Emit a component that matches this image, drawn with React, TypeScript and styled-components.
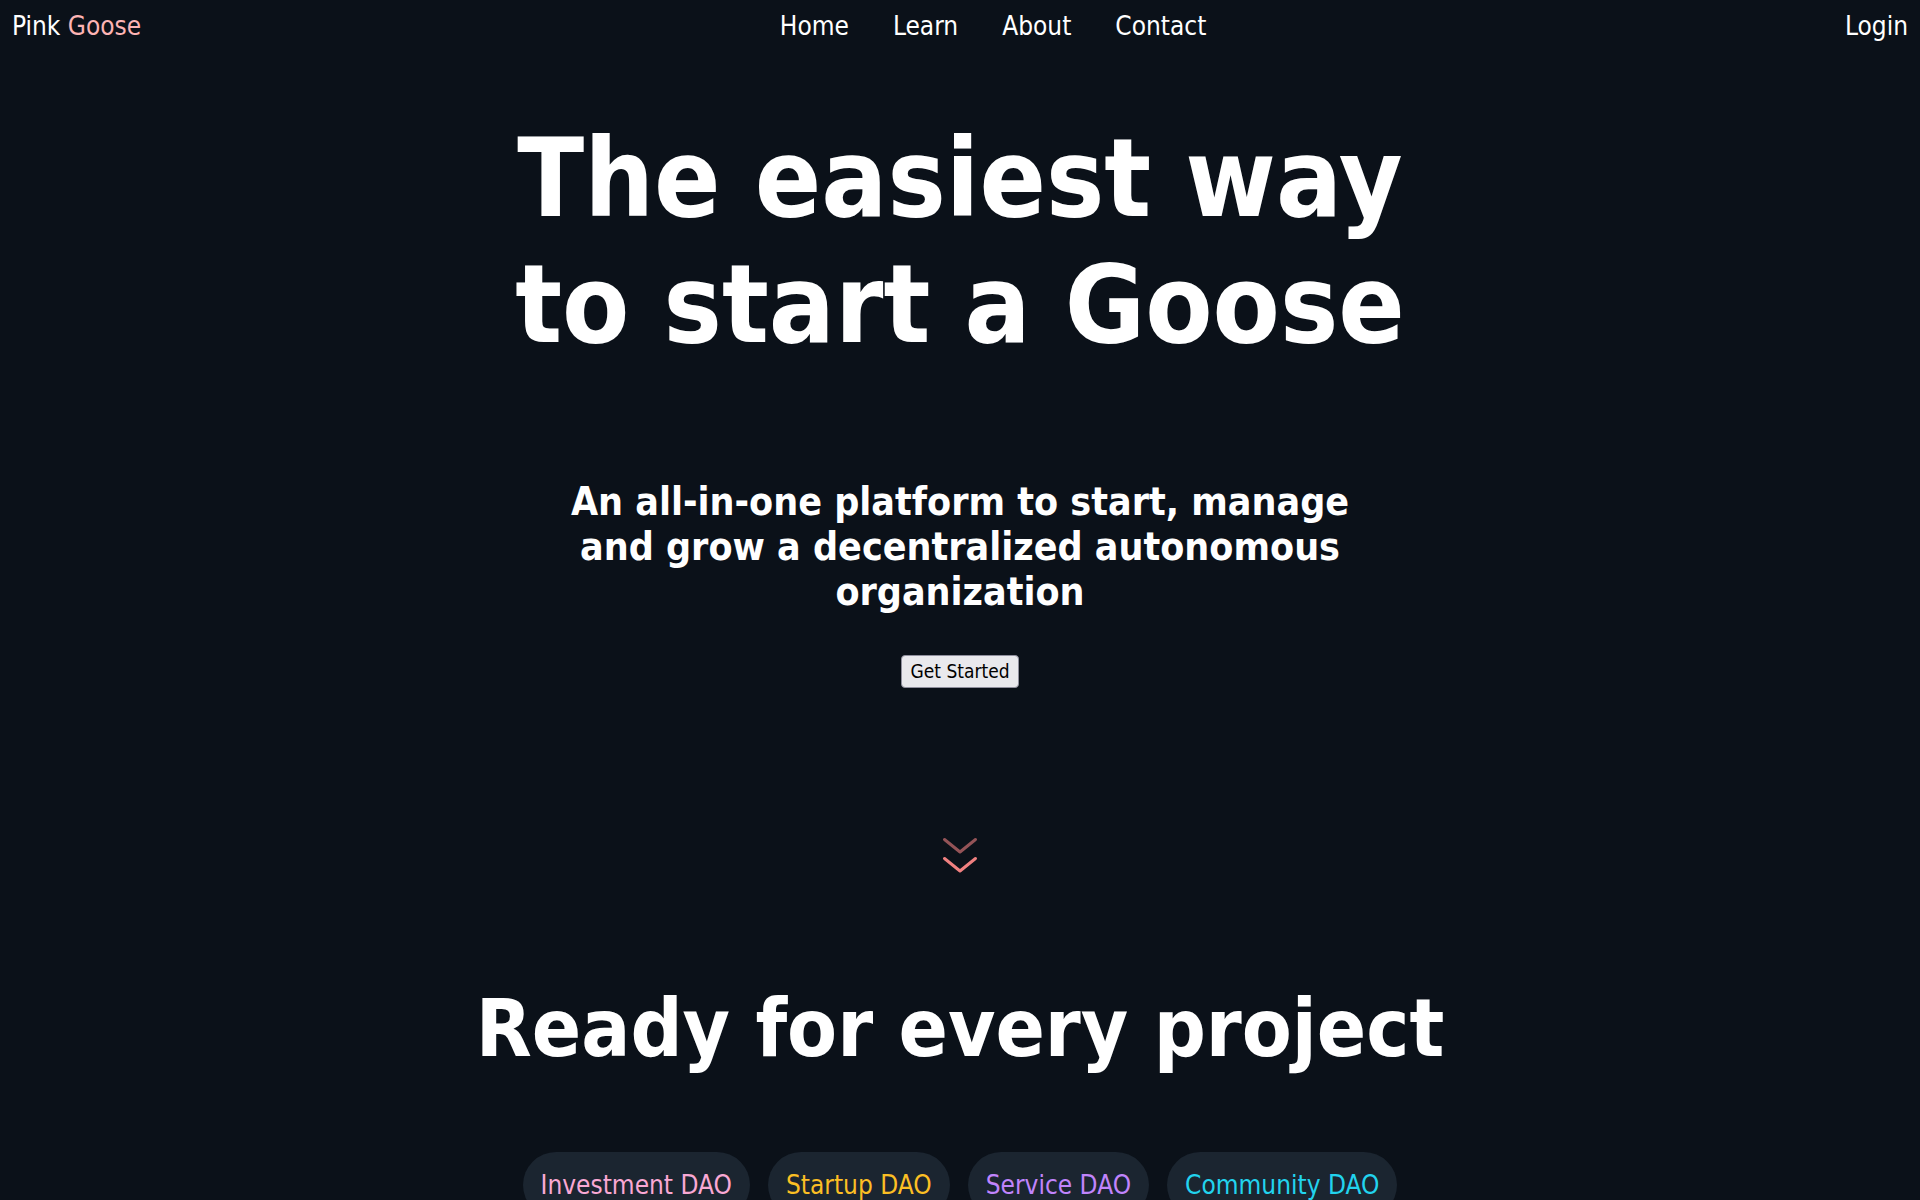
import React from "react";
import styled, { createGlobalStyle } from "styled-components";

const GlobalStyle = createGlobalStyle`
  html, body {
    margin: 0;
    padding: 0;
    background: #0b1119;
  }
  body {
    font-family: "DejaVu Sans Condensed", "DejaVu Sans", sans-serif;
    font-stretch: condensed;
    color: #ffffff;
  }
`;

const Page = styled.div`
  min-height: 1200px;
  overflow: hidden;
`;

const Nav = styled.nav`
  display: flex;
  align-items: center;
  justify-content: space-between;
  padding: 11px 12px;
  font-size: 26px;
  line-height: 30px;
`;

const Logo = styled.a`
  color: #ffffff;
  text-decoration: none;
`;

const LogoAccent = styled.span`
  color: #fdb4b4;
`;

const NavLinks = styled.div`
  display: flex;
  gap: 44px;
`;

const NavLink = styled.a`
  color: #ffffff;
  text-decoration: none;
`;

const Hero = styled.section`
  display: flex;
  flex-direction: column;
  align-items: center;
  text-align: center;
  padding-top: 64px;
`;

const Headline = styled.h1`
  margin: 0;
  font-size: 109px;
  line-height: 126px;
  font-weight: bold;
`;

const Subtitle = styled.h2`
  margin: 111px 0 0;
  max-width: 800px;
  font-size: 39px;
  line-height: 45px;
  font-weight: bold;
`;

const StartButton = styled.button`
  margin-top: 41px;
  padding: 4px 8px;
  font-family: inherit;
  font-size: 19px;
  line-height: 23px;
  color: #000000;
  background: #e9e9ed;
  border: 1px solid #8f8f9d;
  border-radius: 4px;
  cursor: pointer;
`;

const ScrollHint = styled.svg`
  margin-top: 148px;
  display: block;
`;

const SectionTitle = styled.h2`
  margin: 105px 0 0;
  font-size: 81px;
  line-height: 94px;
  font-weight: bold;
`;

const TagRow = styled.div`
  display: flex;
  justify-content: center;
  gap: 18px;
  margin-top: 77px;
`;

const Tag = styled.span<{ $color: string }>`
  padding: 18px 18px;
  font-size: 26px;
  line-height: 30px;
  color: ${(p) => p.$color};
  background: #1b2530;
  border-radius: 999px;
`;

const tags = [
  { label: "Investment DAO", color: "#f9a8d4" },
  { label: "Startup DAO", color: "#fbbf24" },
  { label: "Service DAO", color: "#c084fc" },
  { label: "Community DAO", color: "#22d3ee" },
];

const ChevronsDown = () => (
  <ScrollHint width="40" height="40" viewBox="0 0 40 40" fill="none">
    <polyline
      points="4.5,3.5 20,16 35.5,3.5"
      stroke="#f08080"
      strokeOpacity="0.6"
      strokeWidth="3"
      strokeLinecap="round"
      strokeLinejoin="round"
    />
    <polyline
      points="4.5,22.5 20,35 35.5,22.5"
      stroke="#f08080"
      strokeWidth="3"
      strokeLinecap="round"
      strokeLinejoin="round"
    />
  </ScrollHint>
);

export default function App() {
  return (
    <Page>
      <GlobalStyle />
      <Nav>
        <Logo href="#">
          Pink <LogoAccent>Goose</LogoAccent>
        </Logo>
        <NavLinks>
          <NavLink href="#">Home</NavLink>
          <NavLink href="#">Learn</NavLink>
          <NavLink href="#">About</NavLink>
          <NavLink href="#">Contact</NavLink>
        </NavLinks>
        <NavLink href="#">Login</NavLink>
      </Nav>
      <Hero>
        <Headline>
          The easiest way
          <br />
          to start a Goose
        </Headline>
        <Subtitle>
          An all-in-one platform to start, manage and grow a decentralized autonomous
          organization
        </Subtitle>
        <StartButton>Get Started</StartButton>
        <ChevronsDown />
        <SectionTitle>Ready for every project</SectionTitle>
        <TagRow>
          {tags.map((t) => (
            <Tag key={t.label} $color={t.color}>
              {t.label}
            </Tag>
          ))}
        </TagRow>
      </Hero>
    </Page>
  );
}
